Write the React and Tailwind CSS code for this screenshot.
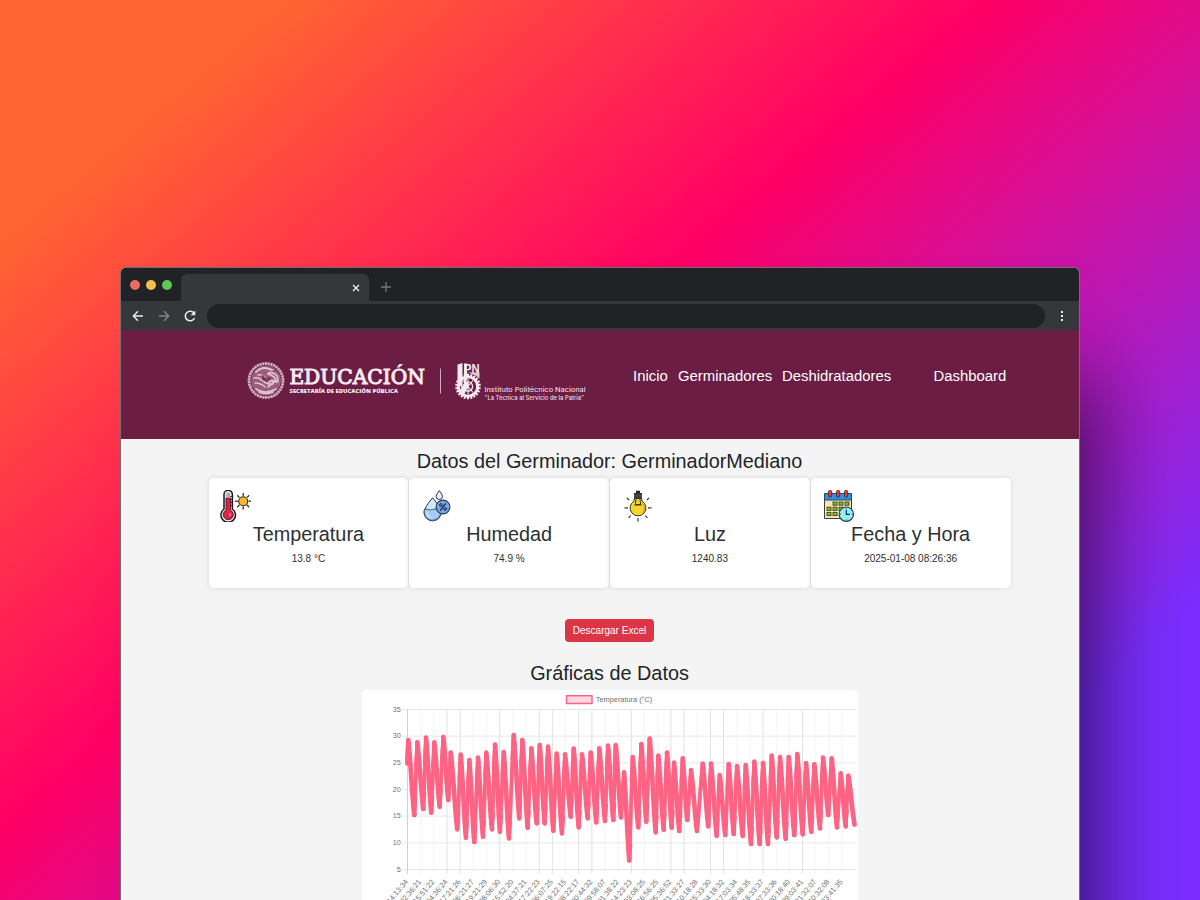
import React from 'react';

const PEAKS = [
  [408.3, 740], [417.3, 742.3], [426, 737.5], [434.3, 742.3], [443.3, 737], [450.7, 752.5], [460.7, 754.5], [469.3, 760],
  [478, 757.7], [486.3, 752.7], [495, 744.5], [503.7, 752], [513.7, 735], [522.3, 740], [531.3, 748.3], [539.7, 745],
  [548, 746.7], [556.7, 753.7], [565, 754.3], [573.7, 748.5], [582, 754.3], [590.7, 752.5], [599.3, 748.3], [608, 745.7],
  [615.7, 745], [624, 772.3], [632.7, 757], [641.3, 744], [649.7, 738.5], [658.3, 755.7], [667, 752.7], [674, 762.7],
  [682.7, 758.3], [691, 770], [702.7, 763.7], [711, 763.7], [719.7, 775], [728.7, 764], [737, 766], [745.7, 765],
  [754.3, 761.7], [763, 763], [771.7, 755.7], [780, 757], [788.7, 757], [797.3, 754], [806, 763], [814.3, 764.3],
  [823, 757.7], [831.7, 758.3], [840.7, 773.3], [848.3, 775.7],
];

const TROUGHS = [
  [414.3, 815], [423.3, 809], [431.3, 812.7], [439.7, 806.7], [448.3, 800], [457.3, 829.3], [466, 837.7], [474.3, 842],
  [483, 836.7], [492, 829.3], [500, 831.7], [509, 838.3], [519.3, 818.3], [527.7, 827.7], [536.7, 823.3], [544.7, 823.3],
  [553.3, 830.7], [562, 833.3], [570.7, 816.7], [578.7, 827.3], [587.7, 818.3], [596.3, 822.3], [605, 821], [613.3, 820],
  [621, 817.3], [629.3, 860.5], [638.3, 827.3], [646.3, 821.7], [655.7, 832.3], [663.7, 829.7], [671.7, 827.7], [679.3, 831],
  [687.3, 820], [697, 831], [708.3, 826.3], [716.7, 835.7], [725.3, 835], [733.7, 834], [742.7, 836], [751, 844],
  [759.7, 844], [768, 844], [776.7, 837.3], [785.7, 838.7], [794.3, 835], [802.7, 834.3], [811.3, 831.7], [820, 828.3],
  [828.3, 815], [837, 827.3], [845.7, 826.3], [854.5, 824.5],
];

const LABELS = [
  '14:13:34', '02:36:21', '15:51:22', '04:36:24', '17:21:26', '06:21:27', '19:21:29', '08:06:30', '15:52:20', '04:37:21',
  '17:22:23', '06:07:25', '19:22:15', '08:22:17', '20:44:32', '09:58:07', '01:38:22', '14:23:23', '03:08:25', '16:56:25',
  '05:36:52', '21:33:27', '10:18:28', '15:33:30', '04:18:32', '17:03:34', '05:48:35', '18:33:37', '07:33:36', '20:18:40',
  '09:03:41', '21:32:07', '10:32:08', '23:41:35',
];

const STRONG = [0, 3, 4, 7, 10, 11, 13, 14, 17, 20, 21, 23, 24, 27, 30];

const curve = ([x1, y1], [x2, y2]) => {
  const h = (y2 - y1) * 0.3;
  const w = (x2 - x1) * 0.42;
  return `M${x1} ${y1}C${(x1 + w).toFixed(1)} ${(y1 + h).toFixed(1)} ${(x2 - w).toFixed(1)} ${(y2 - h).toFixed(1)} ${x2} ${y2}`;
};

const FALLS = 'M407.5 760L408.3 740' + PEAKS.map((p, i) => curve(p, TROUGHS[i])).join('');
const RISES = TROUGHS.slice(0, -1).map((t, i) => curve(t, PEAKS[i + 1])).join('');
const TIPS =
  PEAKS.map(([x, y]) => `M${x} ${y}l-1.4 24M${x} ${y}l1.6 24`).join('') +
  TROUGHS.slice(0, -1).map(([x, y]) => `M${x} ${y}l-1.6 -20M${x} ${y}l1.2 -16`).join('');

function Chart() {
  return (
    <svg viewBox="362 690 496 230" className="block h-[230px] w-[496px]" fontFamily="'Liberation Sans', Arial, sans-serif" fill="#707070">
      {LABELS.map((l, i) => {
        const x = 407.5 + i * 13.17;
        return (
          <g key={i}>
            <path d={`M${x} 709.5V874`} stroke={STRONG.includes(i) ? '#dfe1e2' : '#f3f4f4'} strokeWidth="1" />
            <text x={x + 1} y="882" fontSize="7.4" textAnchor="end" transform={`rotate(-50 ${x + 1} 882)`}>{l}</text>
          </g>
        );
      })}
      {[35, 30, 25, 20, 15, 10, 5].map((v, i) => {
        const y = 709.5 + i * 26.67;
        return (
          <g key={v}>
            <path d={`M402.5 ${y}H856`} stroke="#e6e8e8" strokeWidth="1" />
            <text x="400.8" y={y + 2.2} fontSize="7.2" textAnchor="end">{v}</text>
          </g>
        );
      })}
      <path d="M407.5 709.5V874" stroke="#cfd1d1" strokeWidth="1" />
      <rect x="566.5" y="695.7" width="25.5" height="7.8" fill="#ffd8e0" stroke="#ff6384" strokeWidth="1.5" />
      <text x="595.8" y="702.2" fontSize="7.4" textLength="56.5">Temperatura (°C)</text>
      <g fill="none" stroke="#ff6384" strokeLinecap="round" strokeLinejoin="round">
        <path d={RISES} strokeWidth="3.4" strokeOpacity="0.65" />
        <path d={RISES} strokeWidth="4.2" strokeDasharray="0 2.9" />
        <path d={FALLS} strokeWidth="4.7" />
        <path d={TIPS} strokeWidth="3.6" />
      </g>
    </svg>
  );
}

function ThermometerIcon() {
  return (
    <svg viewBox="0 0 32 32" className="-ml-[1.5px] h-8 w-8">
      <path d="M5 4.5a4.2 4.2 0 0 1 8.4 0V19a7.3 7.3 0 1 1-8.4 0z" fill="#e5e7ec" stroke="#1b1b22" strokeWidth="1.5" />
      <path d="M7 8h4.5v12.2a5 5 0 1 1-4.5 0z" fill="#dc2343" stroke="#54142a" strokeWidth=".9" />
      <path d="M7.2 3.8q2-2.4 4 0v4h-4z" fill="#a9adb8" />
      <path d="M11.4 6.5h2M11.4 9.5h2M11.4 12.5h2M11.4 15.5h2" stroke="#1b1b22" strokeWidth=".9" />
      <path d="M10.7 23.2q1.2 1.4 0 3" stroke="#ff9db0" strokeWidth="1.3" fill="none" />
      <circle cx="24.2" cy="11.2" r="4.5" fill="#f8b62b" stroke="#33291b" strokeWidth="1.1" />
      <path d="M24.2 3.4v2M24.2 17v2M16.4 11.2h2M30 11.2h2M18.7 5.7l1.4 1.4M28.300 15.300l1.400 1.400M29.700 5.700l-1.400 1.400M20.100 15.300l-1.400 1.400" stroke="#33291b" strokeWidth="1.3" strokeLinecap="round" />
    </svg>
  );
}

function HumidityIcon() {
  return (
    <svg viewBox="0 0 32 32" className="ml-[.5px] h-8 w-8">
      <path d="M10.6 7.8Q2 18 2 22.3a8.6 8.6 0 0 0 17.2 0Q19.2 18 10.6 7.8z" fill="#d4e6fb" stroke="#26374f" strokeWidth="1" />
      <path d="M2.5 19.5q2-1 4 0t4 0 4 0 4.2 0a8.7 8.7 0 0 1-8.1 10.9A8.6 8.6 0 0 1 2.5 19.5z" fill="#a3cbf6" stroke="#26374f" strokeWidth=".8" />
      <path d="M5 22q.5 4 4 5.5" stroke="#d3e7fc" strokeWidth="1.3" fill="none" />
      <path d="M17.3.6q-3.2 4-3.2 5.7a3.2 3.2 0 0 0 6.4 0q0-1.7-3.2-5.7z" fill="#e4eefb" stroke="#26374f" strokeWidth="1" />
      <circle cx="21" cy="17" r="6.9" fill="#76a5e3" stroke="#26374f" strokeWidth="1.1" />
      <path d="M23.4 13.8l-4.8 6.4" stroke="#14213a" strokeWidth="1.2" strokeLinecap="round" />
      <circle cx="18.9" cy="15" r="1.3" fill="none" stroke="#14213a" strokeWidth="1" />
      <circle cx="23.2" cy="19" r="1.3" fill="none" stroke="#14213a" strokeWidth="1" />
    </svg>
  );
}

function BulbIcon() {
  return (
    <svg viewBox="0 0 32 32" className="ml-[1px] h-8 w-8">
      <path d="M11.6 8h6.8l.7 3.2a7.9 7.9 0 1 1-8.2 0z" fill="#f6d52d" stroke="#383722" strokeWidth="1" />
      <path d="M18.5 12.2a6.5 6.5 0 0 1 0 11.6q4-4.5 0-11.6z" fill="#e0ae20" />
      <path d="M11.5 15h7M12.3 15l.8-6.5M17.7 15l-.8-6.5M13 15q1-2 2 0 1-2 2 0" stroke="#3d3518" strokeWidth="1" fill="none" />
      <path d="M11 3h8v4.500l-1.200 1.500h-5.600l-1.200-1.500z" fill="#35353d" />
      <path d="M13 .8h4V3h-4z" fill="#23232a" />
      <path d="M11 5.2h8M11 7h8" stroke="#777780" strokeWidth=".4" />
      <path d="M1.5 17.800H5M25 17.800h3.500M4 8l2.200 2.200M26 8l-2.200 2.200M5.500 27.800l2.200-2.200M24.500 27.800l-2.200-2.200M15 28v3.500" stroke="#3b3b3b" strokeWidth="1.200" />
    </svg>
  );
}

function CalendarIcon() {
  return (
    <svg viewBox="0 0 32 32" className="h-8 w-8">
      <path d="M1.5 4h27v24.5h-27z" fill="#ffe5b0" stroke="#3a3f45" strokeWidth="1" />
      <path d="M1.5 3.5h27V10h-27z" fill="#2795e5" stroke="#204967" strokeWidth="1" />
      {[5.5, 13.5, 21.5].map((x) => (
        <rect key={x} x={x} y=".6" width="3.2" height="6.4" rx="1" fill="#dd3f49" stroke="#612128" strokeWidth=".9" />
      ))}
      {[[10, 12], [16, 12], [22, 12], [4, 17.2], [10, 17.2], [16, 17.2], [4, 22.4], [10, 22.4]].map(([x, y]) => (
        <rect key={`${x}-${y}`} x={x} y={y} width="4" height="3.2" fill="#8db83c" stroke="#354820" strokeWidth=".9" />
      ))}
      <circle cx="23.3" cy="24.2" r="7.2" fill="#95eef3" stroke="#263f4b" strokeWidth="1.2" />
      <path d="M23.3 19.8v4.6h3.6" stroke="#14303c" strokeWidth="1.2" fill="none" />
      <path d="M23.3 17.8v1M23.3 29.5v1M17 24.2h1M28.7 24.2h1" stroke="#14303c" strokeWidth=".8" />
    </svg>
  );
}

const TICKS = Array.from({ length: 22 }, (_, i) => i * (360 / 22));

function Logos() {
  return (
    <svg viewBox="246 358 344 46" className="h-[46px] w-[344px] shrink-0" fill="#f7e9f0">
      <g fill="none" stroke="#d3b0c0">
        <circle cx="266" cy="380.5" r="17" strokeWidth="2.8" strokeDasharray="2.3 .5" />
        <circle cx="266" cy="380.5" r="14.4" strokeWidth=".6" />
      </g>
      <circle cx="266" cy="380.5" r="13.8" fill="#a9748d" fillOpacity=".75" />
      <g fill="none" stroke="#e0c3d0" strokeLinecap="round">
        <path d="M256 372q6-6 13-3 5 1 6 5-5-3-7 0 8 2 8 8-5-3-8 1" strokeWidth="1.8" />
        <path d="M254 378q5-1 9 3t10 3M255 383q6 0 10 4M258 375q6-1 9 5" strokeWidth="1.5" />
        <path d="M256 389q9 6 20 0M259 392q7 3 14 0M268 387l6-5M277 375l1 7" strokeWidth="1.7" />
      </g>
      <path d="M262 374l4 4 5-1-3 5-6-2zM271 371l5-1-1 3z" fill="#6b1d43" fillOpacity=".7" />
      <text x="289.4" y="383.8" fontFamily="'DejaVu Serif', serif" fontSize="20.5" textLength="135.5" lengthAdjust="spacingAndGlyphs" stroke="#f7e9f0" strokeWidth="1.05">EDUCACIÓN</text>
      <text x="289.5" y="393.3" fontFamily="'Open Sans', sans-serif" fontWeight="800" fontSize="4.9" textLength="108.5" lengthAdjust="spacingAndGlyphs">SECRETARÍA DE EDUCACIÓN PÚBLICA</text>
      <path d="M440.5 368.5V393.5" stroke="#d3aabd" strokeWidth="1" />
      <g transform="translate(468 386.5)">
        {TICKS.map((a) => (
          <rect key={a} x="-1" y="-12.8" width="2" height="3" transform={`rotate(${a})`} />
        ))}
        <circle r="9.6" fill="none" stroke="#f7e9f0" strokeWidth="2.8" />
        <circle r="4.6" fill="none" stroke="#f7e9f0" strokeWidth="1.3" />
        <path d="M0-8V8M-5-6L5 6M5-6L-5 6" stroke="#f7e9f0" strokeWidth="1.1" />
      </g>
      <path d="M457.5 364.5l5-1.5v26l-5-7zM464 363.5h3v16l-3 6z" />
      <path d="M460 390l6-9 3 3-5 11z" />
      <path d="M468 372.5h11.5v6l-4-3z" fillOpacity=".85" />
      <text x="464" y="372.5" fontFamily="'Liberation Sans', sans-serif" fontWeight="700" fontSize="12" textLength="15.5" lengthAdjust="spacingAndGlyphs">PN</text>
      <g fontFamily="Inter, sans-serif" fontWeight="500" fillOpacity=".95">
        <text x="484.5" y="391.5" fontSize="6.2" textLength="101" lengthAdjust="spacingAndGlyphs">Instituto Politécnico Nacional</text>
        <text x="484.5" y="399.5" fontSize="5.5" textLength="99.5" lengthAdjust="spacingAndGlyphs">"La Técnica al Servicio de la Patria"</text>
      </g>
    </svg>
  );
}

function BrowserChrome() {
  return (
    <div className="bg-[#35373b]">
      <div className="flex h-[33px] bg-[#202225]">
        <div className="w-[60px] shrink-0 pl-[9px] pt-3">
          <div className="flex gap-[6px]">
            <span className="h-[10px] w-[10px] rounded-full bg-[#ed6b66]" />
            <span className="h-[10px] w-[10px] rounded-full bg-[#f5bf4f]" />
            <span className="h-[10px] w-[10px] rounded-full bg-[#61c554]" />
          </div>
        </div>
        <div className="mt-[6px] flex w-[188px] items-center justify-end rounded-t-md bg-[#35373b] pr-[9px]">
          <svg viewBox="0 0 8 8" className="h-2 w-2"><path d="M1 1l6 6M7 1L1 7" stroke="#eee" strokeWidth="1.4" /></svg>
        </div>
        <div className="flex items-center pl-3 pt-[5px]">
          <svg viewBox="0 0 10 10" className="h-[10px] w-[10px]"><path d="M5 0v10M0 5h10" stroke="#75777a" strokeWidth="1.3" /></svg>
        </div>
      </div>
      <div className="flex h-[29px] items-center">
        <svg viewBox="0 0 70 14" className="ml-[10px] h-[14px] w-[70px] shrink-0" fill="none" strokeWidth="1.4">
          <path d="M12 7H2.5M7 2.3L2.3 7 7 11.7" stroke="#eceded" />
          <path d="M28 7h9.5M33 2.3L37.7 7 33 11.7" stroke="#85878a" />
          <path d="M63.2 4.5A4.8 4.8 0 1 0 63.5 9" stroke="#eceded" strokeWidth="1.5" />
          <path d="M64.3 1.6v4.7h-4.7z" fill="#eceded" />
        </svg>
        <div className="ml-[6px] h-6 w-[838px] rounded-full bg-[#202225]" />
        <div className="ml-4 flex flex-col gap-[2px]">
          <span className="h-[2px] w-[2px] bg-[#eee]" />
          <span className="h-[2px] w-[2px] bg-[#eee]" />
          <span className="h-[2px] w-[2px] bg-[#eee]" />
        </div>
      </div>
    </div>
  );
}

const CARDS = [
  { title: 'Temperatura', value: '13.8 °C', Icon: ThermometerIcon },
  { title: 'Humedad', value: '74.9 %', Icon: HumidityIcon },
  { title: 'Luz', value: '1240.83', Icon: BulbIcon },
  { title: 'Fecha y Hora', value: '2025-01-08 08:26:36', Icon: CalendarIcon },
];

export default function App() {
  return (
    <div className="h-[900px] w-[1200px] overflow-hidden bg-[linear-gradient(140deg,#ff6432_12.8%,#ff0065_43.52%,#7b2eff_84.34%)] pl-[120px] pt-[267px] font-['Liberation_Sans',Arial,sans-serif] text-[#212529]">
      <div className="h-[1000px] w-[960px] overflow-hidden rounded-t-md border border-[#6d6f71] bg-[#f4f4f4] shadow-[55px_70px_80px_-40px_rgba(0,0,0,0.6)]">
        <BrowserChrome />
        <header className="flex h-[109px] bg-[#6b1d43] pl-[125px] pt-7 text-white">
          <Logos />
          <nav className="ml-[43px] flex pt-2 text-[14.88px] leading-5">
            <span className="w-[45px]">Inicio</span>
            <span className="w-[104px]">Germinadores</span>
            <span className="w-[151.5px]">Deshidratadores</span>
            <span>Dashboard</span>
          </nav>
        </header>
        <main className="flex w-[890px] flex-col items-center pl-[87px]">
          <h1 className="mt-[10px] text-[19.84px] leading-6">Datos del Germinador: GerminadorMediano</h1>
          <section className="mt-[5px] grid w-[803px] grid-cols-4">
            {CARDS.map(({ title, value, Icon }) => (
              <article key={title} className="mx-[.5px] h-[110px] rounded-[5px] bg-white pt-3 text-[#2e3033] shadow-[0_0_5px_rgba(0,0,0,0.12)]">
                <div className="h-8 pl-3"><Icon /></div>
                <h2 className="text-center text-[19.84px] leading-6">{title}</h2>
                <p className="mt-[5px] text-center text-[10px] leading-[15px]">{value}</p>
              </article>
            ))}
          </section>
          <button className="mt-[31px] h-[23px] w-[89px] rounded bg-[#dc3545] text-[10px] leading-none text-white">Descargar Excel</button>
          <h2 className="mt-[19px] text-[19.84px] leading-6">Gráficas de Datos</h2>
          <div className="mt-[5px] overflow-hidden rounded-[5px] bg-white">
            <Chart />
          </div>
        </main>
      </div>
    </div>
  );
}
